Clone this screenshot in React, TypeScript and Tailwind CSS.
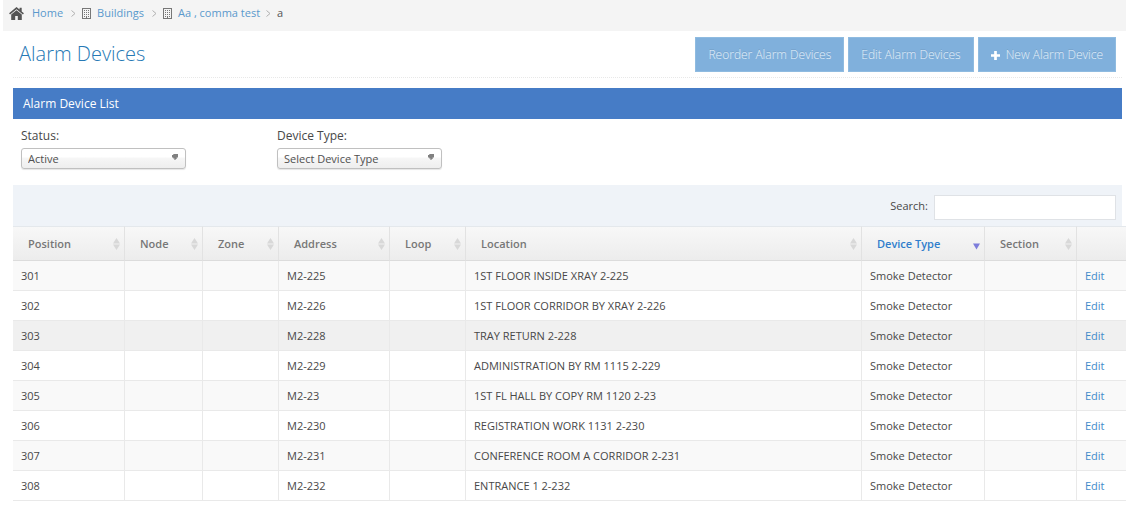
import React, { useState } from 'react';

type Device = { position: number; address: string; location: string };

const devices: Device[] = [
  { position: 301, address: 'M2-225', location: '1ST FLOOR INSIDE XRAY 2-225' },
  { position: 302, address: 'M2-226', location: '1ST FLOOR CORRIDOR BY XRAY 2-226' },
  { position: 303, address: 'M2-228', location: 'TRAY RETURN 2-228' },
  { position: 304, address: 'M2-229', location: 'ADMINISTRATION BY RM 1115 2-229' },
  { position: 305, address: 'M2-23', location: '1ST FL HALL BY COPY RM 1120 2-23' },
  { position: 306, address: 'M2-230', location: 'REGISTRATION WORK 1131 2-230' },
  { position: 307, address: 'M2-231', location: 'CONFERENCE ROOM A CORRIDOR 2-231' },
  { position: 308, address: 'M2-232', location: 'ENTRANCE 1 2-232' },
];

const columns = [
  { label: 'Position', width: 'w-[112px]' },
  { label: 'Node', width: 'w-[78px]' },
  { label: 'Zone', width: 'w-[76px]' },
  { label: 'Address', width: 'w-[111px]' },
  { label: 'Loop', width: 'w-[76px]' },
  { label: 'Location', width: '' },
  { label: 'Device Type', width: 'w-[123px]' },
  { label: 'Section', width: 'w-[92px]' },
];

function HomeIcon() {
  return (
    <svg viewBox="0 0 16 14" className="h-[13px] w-[15px] fill-[#555]" aria-hidden="true">
      <path d="M8 0 0 6.8l1.1 1.3L8 2.4l6.9 5.7L16 6.8l-2.4-2V0.8h-2.3v2z" />
      <path d="M8 3.4 2.3 8.1V14h4.3V9.6h2.8V14h4.3V8.1z" />
    </svg>
  );
}

function BuildingIcon() {
  return (
    <svg viewBox="0 0 9 11" className="h-[11px] w-[9px]" shapeRendering="crispEdges" aria-hidden="true">
      <path d="M0.5 0.5h8v10h-8z" fill="#f4f4f4" stroke="#777" />
      <path
        d="M2 2h1v1H2zM4 2h1v1H4zM6 2h1v1H6zM2 4h1v1H2zM4 4h1v1H4zM6 4h1v1H6zM2 6h1v1H2zM4 6h1v1H4zM6 6h1v1H6zM2 8h1v1H2zM6 8h1v1H6zM4 8h1v2H4z"
        fill="#777"
      />
    </svg>
  );
}

function Chevron() {
  return (
    <svg viewBox="0 0 5 7" className="h-[7px] w-[5px]" fill="none" stroke="#b0b0b0" aria-hidden="true">
      <path d="M0.5 0.5 4 3.5 0.5 6.5" />
    </svg>
  );
}

function SortIcon({ active }: { active?: boolean }) {
  if (active) {
    return (
      <svg viewBox="0 0 7 12" className="h-3 w-[7px] fill-[#7d7ddb]" aria-hidden="true">
        <path d="M0 5.5h7L3.5 11.5z" />
      </svg>
    );
  }
  return (
    <svg viewBox="0 0 7 12" className="h-3 w-[7px] fill-[#d8d8d8]" aria-hidden="true">
      <path d="M3.5 0 7 5.4H0zM0 6.6h7L3.5 12z" />
    </svg>
  );
}

function Filter({ id, label, options }: { id: string; label: string; options: string[] }) {
  return (
    <div className="w-[256px]">
      <label htmlFor={id} className="block text-[12px] leading-4">
        {label}
      </label>
      <div className="relative mt-1 w-[165px]">
        <select
          id={id}
          className="block h-[21px] w-full appearance-none rounded-[3px] border border-[#c0c0c0] bg-linear-to-b from-white from-40% via-[#f6f6f6] via-50% to-[#eee] pl-1.5 text-[11px] leading-4 text-[#505050] shadow-[0_1px_1px_rgba(0,0,0,0.1)]"
        >
          {options.map((option) => (
            <option key={option}>{option}</option>
          ))}
        </select>
        <svg viewBox="0 0 6 6" className="pointer-events-none absolute top-1.5 right-2 h-1.5 w-1.5 fill-[#808080]" aria-hidden="true">
          <path d="M1.3 0H6v3.4H4.7V5H3.6v1H2.4V4.6H1.2V3.4H0V1h1.3z" />
        </svg>
      </div>
    </div>
  );
}

const buttonClass =
  'flex h-[35px] items-center border border-[#8fbbe0] bg-[#80b0dc] pt-0.5 text-[12px] font-light text-[#e4f0fa] [text-shadow:0_-1px_0_rgba(0,0,0,0.12)]';

export default function App() {
  const [search, setSearch] = useState('');
  const rows = devices.filter((d) =>
    `${d.position} ${d.address} ${d.location}`.toLowerCase().includes(search.toLowerCase()),
  );

  return (
    <div className="bg-white font-['Open_Sans','Noto_Sans',sans-serif] text-[#484848]">
      <nav aria-label="Breadcrumb" className="ml-[3px] flex h-[31px] items-center bg-[#f4f4f4] pb-1 pl-1.5 text-[11px] text-[#5a99cc]">
        <HomeIcon />
        <a href="#" className="ml-2">Home</a>
        <span className="mr-1.5 ml-2"><Chevron /></span>
        <BuildingIcon />
        <a href="#" className="ml-1.5">Buildings</a>
        <span className="mr-1.5 ml-2"><Chevron /></span>
        <BuildingIcon />
        <a href="#" className="ml-1.5">Aa , comma test</a>
        <span className="mr-1.5 ml-1.5"><Chevron /></span>
        <span className="text-[#555]">a</span>
      </nav>

      <div className="pl-[13px]">
        <div className="mr-1 flex h-[47px] items-center justify-between border-b border-dotted border-[#e8e8e8] pr-1.5 pl-1.5">
          <h1 className="text-[20px] font-light text-[#2679b5]">Alarm Devices</h1>
          <div className="flex gap-1">
            <button type="button" className={`${buttonClass} px-3`}>Reorder Alarm Devices</button>
            <button type="button" className={`${buttonClass} px-3`}>Edit Alarm Devices</button>
            <button type="button" className={`${buttonClass} gap-1.5 px-3`}>
              <svg viewBox="0 0 10 10" className="h-[9px] w-[9px] fill-white" aria-hidden="true">
                <path d="M3.5 0h3v3.5H10v3H6.5V10h-3V6.5H0v-3h3.5z" />
              </svg>
              New Alarm Device
            </button>
          </div>
        </div>

        <h2 className="mt-2.5 mr-1 flex h-[31px] items-center bg-[#467cc6] pl-2.5 text-[12px] text-white">
          Alarm Device List
        </h2>

        <div className="flex px-2 pt-[9px] pb-4">
          <Filter id="status" label="Status:" options={['Active', 'Inactive']} />
          <Filter id="device-type" label="Device Type:" options={['Select Device Type', 'Smoke Detector']} />
        </div>

        <div className="mr-1 flex h-[41px] items-center justify-end gap-1.5 bg-[#eff3f8] pt-1 pr-1.5">
          <label htmlFor="search" className="pb-0.5 text-[11px]">Search:</label>
          <input
            id="search"
            type="text"
            value={search}
            onChange={(e) => setSearch(e.target.value)}
            className="h-[25px] w-[182px] border border-[#dfe2e6] bg-white px-1.5 text-[11px] outline-none"
          />
        </div>

        <table className="w-full table-fixed border-separate border-spacing-0 text-left text-[11px] leading-4">
          <thead>
            <tr className="bg-linear-to-b from-[#f8f8f8] to-[#ececec] text-[#777]">
              {columns.map(({ label, width }) => (
                <th
                  key={label}
                  className={`${width} h-[35px] border-t border-r border-b border-t-[#e4e8ec] border-r-[#e2e2e2] border-b-[#dcdcdc] pr-1 pl-[15px] font-semibold`}
                >
                  <span className="flex items-center justify-between">
                    <span className={label === 'Device Type' ? 'text-[#307ecc]' : ''}>{label}</span>
                    <SortIcon active={label === 'Device Type'} />
                  </span>
                </th>
              ))}
              <th className="w-[49px] border-t border-b border-t-[#e4e8ec] border-b-[#dcdcdc]" aria-label="Actions" />
            </tr>
          </thead>
          <tbody className="[&_td]:h-[30px] [&_td]:border-r [&_td]:border-b [&_td]:border-[#e9e9e9] [&_td]:pl-2 [&_td:last-child]:border-r-0">
            {rows.map((d) => (
              <tr key={d.position} className={d.position === 303 ? 'bg-[#f0f0f0]' : 'odd:bg-[#f9f9f9]'}>
                <td>{d.position}</td>
                <td />
                <td />
                <td>{d.address}</td>
                <td />
                <td>{d.location}</td>
                <td>Smoke Detector</td>
                <td />
                <td><a href="#" className="text-[#428bca]">Edit</a></td>
              </tr>
            ))}
          </tbody>
        </table>
      </div>
    </div>
  );
}
